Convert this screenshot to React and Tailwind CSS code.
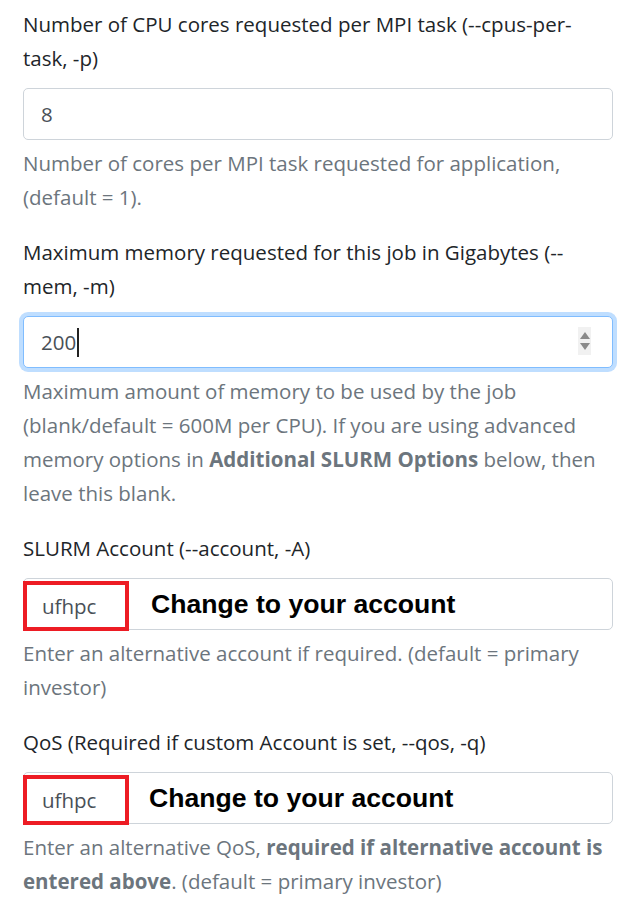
import React from "react";

const Spinner = () => (
  <div className="absolute right-[21px] top-[10px] flex h-[28px] w-[13px] flex-col items-center justify-center gap-[4px] bg-[#f1f1f1]">
    <svg width="10" height="7" viewBox="0 0 10 7">
      <path d="M5 0 L10 7 L0 7 Z" fill="#8a8a8a" />
    </svg>
    <svg width="10" height="7" viewBox="0 0 10 7">
      <path d="M0 0 L10 0 L5 7 Z" fill="#8a8a8a" />
    </svg>
  </div>
);

// red annotation box + note drawn over the account inputs
const AccountInput = ({ noteLeft }) => (
  <div className="relative h-[52px] w-full rounded-[5px] border border-[#ced4da] bg-white">
    <div className="absolute -left-px top-[2px] flex h-[50px] w-[106px] items-center border-4 border-[#ed1c24] pl-[15px] text-[#495057]">
      ufhpc
    </div>
    <div
      className={`absolute top-0 flex h-full items-center font-['Liberation_Sans',Arial,sans-serif] text-[26.6px] font-bold text-black ${noteLeft}`}
    >
      Change to your account
    </div>
  </div>
);

const Group = ({ label, children, help }) => (
  <div className="flex flex-col">
    <label className="mb-[13px] text-[#212529]">{label}</label>
    {children}
    <p className="mt-[6px] text-[#6c757d]">{help}</p>
  </div>
);

export default function App() {
  return (
    <div className="min-h-screen bg-white pl-[23px] pr-[20px] pt-[7px] font-['Open_Sans',sans-serif] text-[20.5px] leading-[34px]">
      <div className="flex flex-col gap-[21px]">
        <Group
          label="Number of CPU cores requested per MPI task (--cpus-per-task, -p)"
          help="Number of cores per MPI task requested for application, (default = 1)."
        >
          <div className="flex h-[52px] w-full items-center rounded-[5px] border border-[#ced4da] bg-white pl-[17px] text-[#495057]">
            8
          </div>
        </Group>

        <Group
          label="Maximum memory requested for this job in Gigabytes (--mem, -m)"
          help={
            <>
              Maximum amount of memory to be used by the job (blank/default = 600M per CPU). If you are using advanced memory options in{" "}
              <b className="font-bold">Additional SLURM Options</b> below, then leave this blank.
            </>
          }
        >
          <div className="relative flex h-[52px] w-full items-center rounded-[5px] border border-[#80bdff] bg-white pl-[17px] text-[#495057] shadow-[0_0_0_4px_rgba(0,123,255,0.25)]">
            200
            <span className="ml-[1px] inline-block h-[29px] w-[2px] bg-[#222]" />
            <Spinner />
          </div>
        </Group>

        <Group
          label="SLURM Account (--account, -A)"
          help="Enter an alternative account if required. (default = primary investor)"
        >
          <AccountInput noteLeft="left-[127px]" />
        </Group>

        <Group
          label="QoS (Required if custom Account is set, --qos, -q)"
          help={
            <>
              Enter an alternative QoS, <b className="font-bold">required if alternative account is entered above</b>. (default = primary investor)
            </>
          }
        >
          <AccountInput noteLeft="left-[125px]" />
        </Group>
      </div>
    </div>
  );
}
